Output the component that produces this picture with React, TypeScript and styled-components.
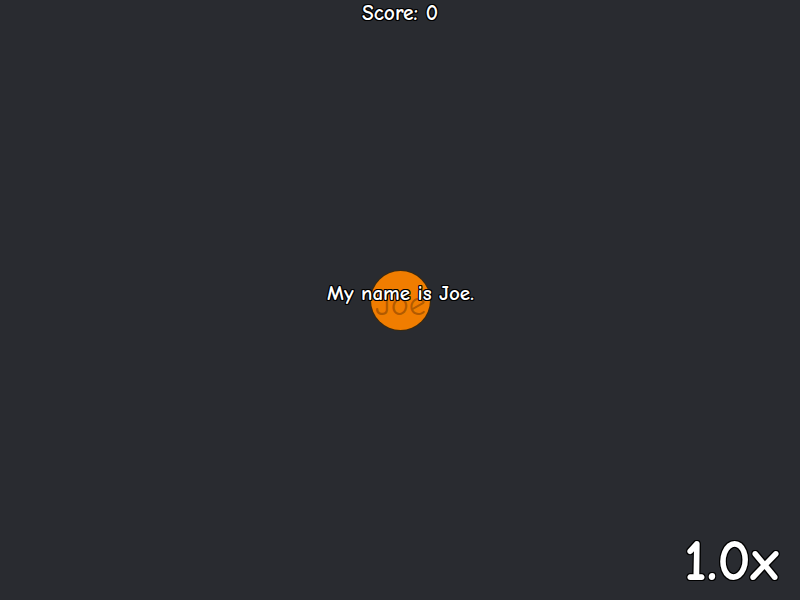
import React from "react";
import styled, { createGlobalStyle } from "styled-components";

const Global = createGlobalStyle`
  html, body { margin: 0; padding: 0; background: #292b30; }
  body { font-family: "Comic Sans MS", "Comic Neue", "Open Sans", sans-serif; }
`;

const Stage = styled.div`
  position: relative;
  width: 800px;
  height: 600px;
  background: #292b30;
  overflow: hidden;
  display: flex;
  flex-direction: column;
  align-items: center;
`;

const outline = `
  text-shadow:
    -1px -1px 0 #000, 1px -1px 0 #000, -1px 1px 0 #000, 1px 1px 0 #000,
    0 -1px 0 #000, 0 1px 0 #000, -1px 0 0 #000, 1px 0 0 #000;
`;

const Score = styled.div`
  margin-top: 0px;
  color: #fff;
  font-size: 21.5px;
  font-weight: 600;
  line-height: 26px;
  ${outline}
`;

const Ball = styled.div<{ $x: number; $y: number; $r: number }>`
  position: absolute;
  left: ${(p) => p.$x - p.$r}px;
  top: ${(p) => p.$y - p.$r}px;
  width: ${(p) => p.$r * 2}px;
  height: ${(p) => p.$r * 2}px;
  border-radius: 50%;
  background: #f07d00;
  box-shadow: 0 0 0 1px #3a2a10;
  display: flex;
  align-items: center;
  justify-content: center;
`;

const BallName = styled.span`
  color: rgba(150, 75, 0, 0.7);
  font-size: 34px;
  font-weight: 400;
  margin-top: 6px;
  letter-spacing: 0px;
`;

const Speech = styled.div<{ $x: number; $y: number }>`
  position: absolute;
  left: ${(p) => p.$x}px;
  top: ${(p) => p.$y}px;
  transform: translate(-50%, -50%);
  white-space: nowrap;
  color: #fff;
  font-size: 21px;
  font-weight: 600;
  line-height: 26px;
  ${outline}
`;

const Speed = styled.div`
  position: absolute;
  right: 21px;
  bottom: 6px;
  color: #fff;
  font-size: 58px;
  font-weight: 600;
  line-height: 64px;
  ${outline}
`;

export default function App() {
  return (
    <>
      <Global />
      <Stage>
        <Score>Score: 0</Score>
        <Ball $x={400.5} $y={300.5} $r={29.5}>
          <BallName>Joe</BallName>
        </Ball>
        <Speech $x={400.5} $y={293}>My name is Joe.</Speech>
        <Speed>1.0x</Speed>
      </Stage>
    </>
  );
}
